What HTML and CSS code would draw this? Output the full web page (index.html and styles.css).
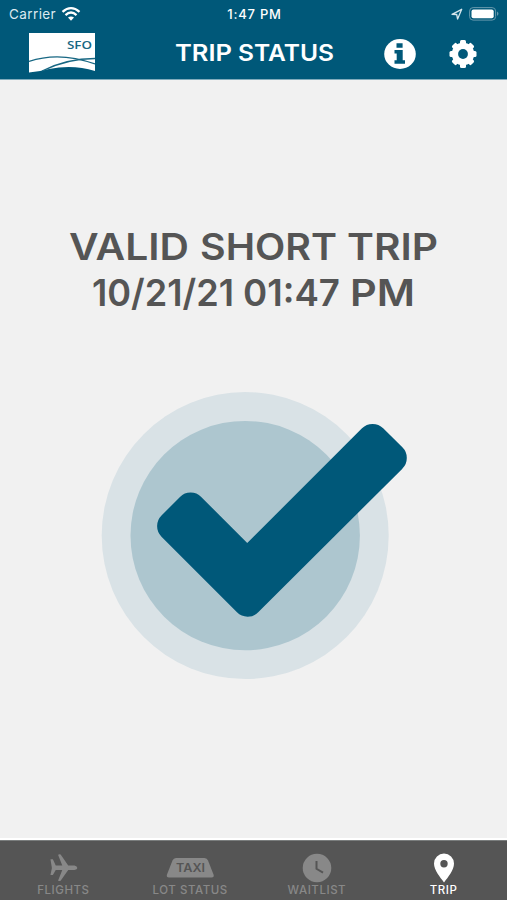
FILE: index.html
```html
<!DOCTYPE html>
<html lang="en">
<head>
<meta charset="utf-8">
<title>Trip Status</title>
<link rel="stylesheet" href="styles.css">
</head>
<body>
<div class="app">
  <header class="header">
    <div class="statusbar">
      <div class="carrier"><span>Carrier</span>
        <svg width="20" height="16" viewBox="0 0 20 16"><g fill="none" stroke="#fff" stroke-width="2.3"><path d="M1.500 5.800Q10-1.600 18.500 5.800"/><path d="M4.500 9.100Q10 4 15.500 9.100"/></g><path d="M7 11.600Q10 9.300 13 11.600L10 14.800Z" fill="#fff"/></svg>
      </div>
      <div class="time">1:47 PM</div>
      <div class="device">
        <svg width="12" height="12" viewBox="0 0 12 12"><path d="M1 6.300L10.700 1.300 6.600 11 5.700 6.500Z" fill="none" stroke="#d5e6ec" stroke-width="1.300" stroke-linejoin="round"/></svg>
        <svg width="31" height="14" viewBox="0 0 31 14"><rect x=".6" y=".6" width="26" height="12.500" rx="3.500" fill="none" stroke="#6699ad"/><rect x="2.500" y="2.500" width="22.200" height="8.700" rx="2" fill="#fff"/><path d="M28 4.600Q31 6.800 28 9Z" fill="#6699ad"/></svg>
      </div>
    </div>
    <div class="navbar">
      <svg class="logo" width="66" height="40" viewBox="0 0 66 40"><path d="M0 0H66V38Q44 31 20 36Q9 39 0 39.500Z" fill="#fff"/><g fill="none" stroke="#176783" stroke-width="1.300"><path d="M0 28.500Q30 18 66 31"/><path d="M13 38Q38 25.500 66 25.500"/></g><text x="38" y="16.200" textLength="25" lengthAdjust="spacingAndGlyphs" class="logo-text">SFO</text></svg>
      <svg class="title" width="160" height="30" viewBox="0 0 160 30" role="heading" aria-level="1"><text x="0" y="23" textLength="57" lengthAdjust="spacingAndGlyphs">TRIP</text><text x="63" y="23" textLength="96" lengthAdjust="spacingAndGlyphs">STATUS</text></svg>
      <svg class="info" width="32" height="32" viewBox="0 0 32 32"><ellipse cx="16" cy="16" rx="15.800" ry="15" fill="#fff"/><path d="M12.500 5.200H18.600V9.800H12.500ZM10.500 12H18.700V22.200H21V25.800H10.500V22.200H12.700V15.600H10.500Z" fill="#005879"/></svg>
      <svg class="gear" width="28" height="30" viewBox="-14 -15 28 30"><g fill="#fff"><circle r="11.200"/><rect x="-3" y="-14" width="6" height="28" rx="1.500"/><rect x="-3" y="-13.500" width="6" height="27" rx="1.500" transform="rotate(45)"/><rect x="-3" y="-13.500" width="6" height="27" rx="1.500" transform="rotate(90)"/><rect x="-3" y="-13.500" width="6" height="27" rx="1.500" transform="rotate(135)"/></g><circle r="4.900" fill="#005879"/></svg>
    </div>
  </header>
  <main class="content">
    <svg class="message" width="380" height="106" viewBox="-5 -8 380 106">
      <g><text x="0" y="34" textLength="120" lengthAdjust="spacingAndGlyphs">VALID</text><text x="131" y="34" textLength="137" lengthAdjust="spacingAndGlyphs">SHORT</text><text x="278" y="34" textLength="91" lengthAdjust="spacingAndGlyphs">TRIP</text></g>
      <g><text x="23" y="80" textLength="142" lengthAdjust="spacingAndGlyphs">10/21/21</text><text x="174" y="80" textLength="97" lengthAdjust="spacingAndGlyphs">01:47</text><text x="281" y="80" textLength="65" lengthAdjust="spacingAndGlyphs">PM</text></g>
    </svg>
    <svg class="check" width="308" height="290" viewBox="100 391 308 290"><circle cx="245.200" cy="535.600" r="143.500" fill="#d9e2e6"/><circle cx="245.200" cy="535.600" r="114.700" fill="#adc6cf"/><path d="M172.100 526.100L190.600 507.600 247.300 564.200 372.600 438.900 391.800 458 247.600 601.700Z" fill="#005879" stroke="#005879" stroke-width="30" stroke-linejoin="round"/></svg>
  </main>
  <nav class="tabs">
    <div class="tab"><svg width="30" height="30" viewBox="0 0 30 30"><path d="M1 6H3.500L6.500 12.600H13.300L9 1.500Q9.500.3 11.600 1L19.500 12.600H26Q29 13.300 29 15Q29 16.700 26 17.300H19.500L11.600 28.500Q9.500 29.200 9 28L13.300 17.300H6.500L3.500 22.500H1L2.500 15Z" transform="translate(1.500 .5) scale(.96)"/></svg><span>FLIGHTS</span></div>
    <div class="tab"><svg width="50" height="30" viewBox="0 0 50 30"><path d="M11 5H39.500Q42 5 43 7.500L48.500 21.500Q49.500 24.500 46.500 24.500H4Q1 24.500 2 21.500L7.500 7.500Q8.500 5 11 5Z"/><text x="11" y="19" textLength="29" lengthAdjust="spacingAndGlyphs">TAXI</text></svg><span>LOT STATUS</span></div>
    <div class="tab"><svg width="30" height="30" viewBox="0 0 30 30"><circle cx="15" cy="15" r="14.300"/><path d="M14.500 8V15.800L21 19.700" fill="none" stroke="#555" stroke-width="2"/></svg><span>WAITLIST</span></div>
    <div class="tab active"><svg width="22" height="30" viewBox="0 0 22 30"><path fill-rule="evenodd" d="M11 .5A10 10 0 0 0 1 10.500C1 17 7 24 11 29.500C15 24 21 17 21 10.500A10 10 0 0 0 11 .500ZM11 7A3.700 3.700 0 1 1 11 14.400A3.700 3.700 0 1 1 11 7Z"/></svg><span>TRIP</span></div>
  </nav>
</div>
</body>
</html>
```
FILE: styles.css
```css
* { box-sizing: border-box; }
body { margin: 0; font-family: "Inter", "Liberation Sans", sans-serif; }
svg { display: block; flex: none; }
.app { height: 900px; display: flex; flex-direction: column; background: #f1f1f1; }
.header { height: 80px; background: #005879; border-bottom: 1px solid #80abbc; color: #fff; }
.statusbar { height: 27px; display: grid; grid-template-columns: 1fr 1fr 1fr; align-items: center; padding: 0 7px 0 9px; font-size: 13.5px; }
.carrier { display: flex; align-items: center; gap: 5px; color: #dceaf0; letter-spacing: .4px; }
.time { text-align: center; font-size: 13px; font-weight: 500; letter-spacing: .8px; }
.device { display: flex; align-items: center; justify-content: flex-end; gap: 6px; }
.navbar { display: flex; align-items: center; height: 52px; padding: 0 30px 0 29px; }
.logo { margin-top: -1px; }
.logo-text { font: 600 11.5px "Open Sans", sans-serif; fill: #176783; }
.title { margin-left: 80px; fill: #fff; font-size: 23px; font-weight: 600; }
.info { margin: 2px 0 0 49px; }
.gear { margin: 2px 0 0 33px; }
.content { flex: 1; display: flex; flex-direction: column; align-items: center; padding-top: 138px; border-bottom: 2px solid #fff; }
.message { fill: #555; font-size: 37px; font-weight: 600; }
.check { margin-top: 67px; }
.tabs { height: 60px; display: grid; grid-template-columns: repeat(4, 1fr); background: #555; border-top: 1px solid #7a7d7d; }
.tab { display: flex; flex-direction: column; align-items: center; padding-top: 12px; color: #888; fill: #888; font-size: 11.5px; line-height: 15px; font-weight: 500; letter-spacing: .55px; }
.tab text { fill: #555; font-size: 12px; font-weight: 600; letter-spacing: 0; }
.active { color: #fff; fill: #fff; }
```
